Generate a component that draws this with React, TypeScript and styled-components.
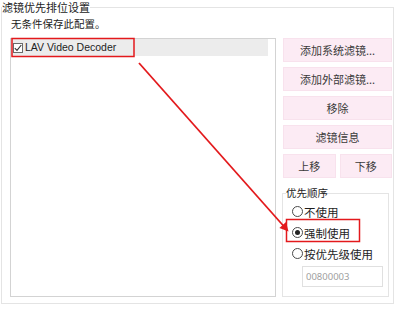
import * as React from 'react';
import styled, { createGlobalStyle } from 'styled-components';

const GlobalStyle = createGlobalStyle`
  html, body {
    margin: 0;
    padding: 0;
    background: #ffffff;
  }
  body {
    font-family: "Noto Sans CJK SC", "Noto Sans", sans-serif;
    font-size: 11px;
    color: #222222;
  }
`;

const Page = styled.div`
  position: relative;
  width: 400px;
  height: 309px;
  padding-left: 1px;
  box-sizing: border-box;
  overflow: hidden;
`;

const GroupBox = styled.fieldset`
  box-sizing: border-box;
  width: 393px;
  height: 304px;
  margin: 0;
  padding: 0;
  border: 1px solid #e4e4e4;
  min-width: 0;
`;

const Legend = styled.legend`
  padding: 0;
  margin: 0;
  font-size: 11px;
  line-height: 15px;
  color: #222222;
`;

const Body = styled.div`
  padding: 0 1px 0 8px;
`;

const Note = styled.div`
  height: 17px;
  line-height: 17px;
  margin-bottom: 6px;
  padding-left: 1px;
  font-size: 10.5px;
`;

const Main = styled.div`
  display: flex;
  gap: 7px;
  height: 259px;
`;

const FilterList = styled.div`
  box-sizing: border-box;
  width: 266px;
  height: 259px;
  border: 1px solid #d3d3d3;
  background: #ffffff;
`;

const FilterRow = styled.div<{ $selected?: boolean }>`
  display: flex;
  align-items: center;
  height: 17px;
  margin-right: 7px;
  padding-left: 2px;
  background: ${(p) => (p.$selected ? '#ececec' : 'transparent')};
`;

const CheckBox = styled.span`
  display: inline-flex;
  align-items: center;
  justify-content: center;
  box-sizing: border-box;
  width: 10px;
  height: 10px;
  border: 1px solid #6b6b6b;
  background: #ffffff;
`;

const RowText = styled.span`
  margin-left: 2px;
  font-family: "Liberation Sans", Arial, sans-serif;
  font-size: 10.5px;
  line-height: 17px;
  color: #1e1e1e;
`;

const Side = styled.div`
  display: flex;
  flex-direction: column;
  gap: 5px;
  width: 109px;
`;

const Button = styled.div`
  flex: 1;
  box-sizing: border-box;
  height: 24px;
  display: flex;
  align-items: center;
  justify-content: center;
  background: #fcebf4;
  border: 1px solid #f8e2ed;
  color: #3a3a3a;
  font-size: 11px;
`;

const ButtonPair = styled.div`
  display: flex;
  gap: 4px;
`;

const OrderBox = styled.fieldset`
  box-sizing: border-box;
  width: 107px;
  height: 111px;
  margin: 3px 0 0 -1px;
  padding: 0 0 0 3px;
  border: 1px solid #e4e4e4;
  min-width: 0;
`;

const OrderLegend = styled.legend`
  padding: 0;
  font-size: 10.5px;
  line-height: 14px;
  color: #222222;
`;

const RadioList = styled.div`
  padding: 1px 0 0 6px;
`;

const RadioRow = styled.div`
  display: flex;
  align-items: center;
  height: 21px;
`;

const RadioCircle = styled.span<{ $checked?: boolean }>`
  display: inline-flex;
  align-items: center;
  justify-content: center;
  box-sizing: border-box;
  width: 11px;
  height: 11px;
  border-radius: 50%;
  border: 1px solid #4a4a4a;
  background: #ffffff;

  &::after {
    content: '';
    width: 5px;
    height: 5px;
    border-radius: 50%;
    background: ${(p) => (p.$checked ? '#222222' : 'transparent')};
  }
`;

const RadioLabel = styled.span`
  margin-left: 1px;
  font-size: 11.5px;
  color: #1e1e1e;
`;

const PriorityInput = styled.div`
  box-sizing: border-box;
  width: 81px;
  height: 21px;
  margin: 2px 0 0 10px;
  padding-left: 3px;
  border: 1px solid #e0e0e0;
  display: flex;
  align-items: center;
  font-family: "Noto Sans", sans-serif;
  font-size: 9.5px;
  color: #a0a0a0;
`;

const Annotation = styled.svg`
  position: absolute;
  left: 0;
  top: 0;
  pointer-events: none;
`;

const Check = () => (
  <svg width="8" height="8" viewBox="0 0 8 8">
    <path d="M0.8 4.2 L3 6.4 L7.3 1" fill="none" stroke="#333" strokeWidth="1.1" />
  </svg>
);

const radios = [
  { label: '不使用', checked: false },
  { label: '强制使用', checked: true },
  { label: '按优先级使用', checked: false },
];

export default function App() {
  return (
    <Page>
      <GlobalStyle />
      <GroupBox>
        <Legend>滤镜优先排位设置</Legend>
        <Body>
          <Note>无条件保存此配置。</Note>
          <Main>
            <FilterList>
              <FilterRow $selected>
                <CheckBox>
                  <Check />
                </CheckBox>
                <RowText>LAV Video Decoder</RowText>
              </FilterRow>
            </FilterList>
            <Side>
              <Button>添加系统滤镜...</Button>
              <Button>添加外部滤镜...</Button>
              <Button>移除</Button>
              <Button>滤镜信息</Button>
              <ButtonPair>
                <Button>上移</Button>
                <Button>下移</Button>
              </ButtonPair>
              <OrderBox>
                <OrderLegend>优先顺序</OrderLegend>
                <RadioList>
                  {radios.map((r) => (
                    <RadioRow key={r.label}>
                      <RadioCircle $checked={r.checked} />
                      <RadioLabel>{r.label}</RadioLabel>
                    </RadioRow>
                  ))}
                  <PriorityInput>00800003</PriorityInput>
                </RadioList>
              </OrderBox>
            </Side>
          </Main>
        </Body>
      </GroupBox>
      <Annotation width="400" height="309" viewBox="0 0 400 309">
        <rect x="12" y="38.5" width="122" height="18" fill="none" stroke="#e3191c" strokeWidth="1.5" />
        <rect x="286.5" y="219.5" width="73" height="22" fill="none" stroke="#e3191c" strokeWidth="1.5" />
        <line x1="139" y1="63" x2="284" y2="226.5" stroke="#e3191c" strokeWidth="1.8" />
        <polygon points="288.5,231.5 279.4,227.9 286,222" fill="#e3191c" />
      </Annotation>
    </Page>
  );
}
